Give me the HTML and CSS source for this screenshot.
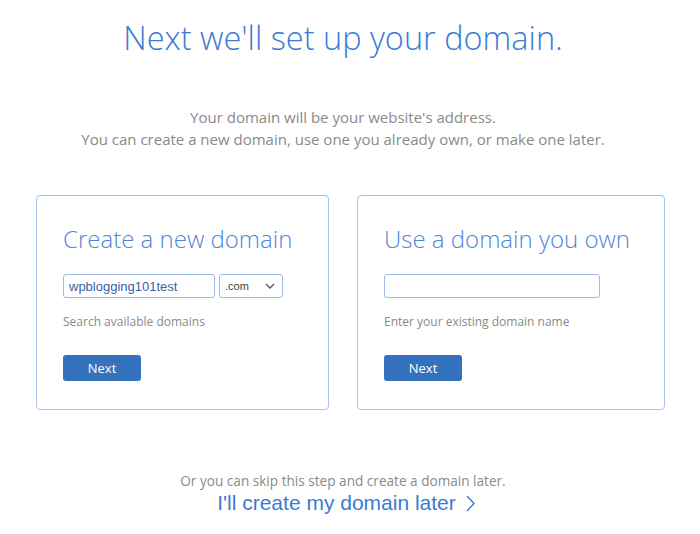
FILE: index.html
```html
<!DOCTYPE html>
<html>
<head>
    <title>Domain setup</title>
    <link rel="stylesheet" href="styles.css">
</head>
<body>
    <h1 class="title">Next we'll set up your domain.</h1>

    <p class="intro">
        Your domain will be your website's address.<br>
        You can create a new domain, use one you already own, or make one later.
    </p>

    <div class="cards">
        <div class="card card-new">
            <h2>Create a new domain</h2>
            <div class="field-row">
                <input type="text" class="domain-input" value="wpblogging101test">
                <div class="tld-select">
                    <span>.com</span>
                    <svg width="10" height="6" viewBox="0 0 10 6"><path d="M1 1l4 4 4-4" fill="none" stroke="#555" stroke-width="1.3"/></svg>
                </div>
            </div>
            <p class="hint">Search available domains</p>
            <button class="next-btn">Next</button>
        </div>

        <div class="card card-own">
            <h2>Use a domain you own</h2>
            <div class="field-row">
                <input type="text" class="own-input">
            </div>
            <p class="hint">Enter your existing domain name</p>
            <button class="next-btn">Next</button>
        </div>
    </div>

    <p class="skip">Or you can skip this step and create a domain later.</p>
    <a class="later-link" href="#">I'll create my domain later
        <svg class="chev" width="9" height="17" viewBox="0 0 9 17"><path d="M1 1l7 7.5-7 7.5" fill="none" stroke="#3a7bd5" stroke-width="1.4"/></svg>
    </a>
</body>
</html>
```

FILE: styles.css
```css
body { margin: 0; padding-right: 14px; font-family: "Open Sans", sans-serif; background: #fff; text-align: center; }
.title { margin: 0; padding-top: 17px; font-size: 32.5px; font-weight: 300; color: #3a7bd5; line-height: 42px; }
.intro { margin: 47px 0 0; font-size: 15px; color: #8a8a8a; line-height: 22px; }
.cards { display: flex; gap: 28px; margin: 45px 0 0 36px; text-align: left; }
.card { border: 1px solid #a7c2ec; border-radius: 4px; padding: 26px; height: 161px; }
.card-new { width: 239px; }
.card-own { width: 254px; }
.card h2 { margin: -1px 0 0; font-size: 24px; font-weight: 300; color: #4f86d9; line-height: 36px; }
.field-row { display: flex; gap: 4px; margin-top: 17px; }
.domain-input, .own-input, .tld-select {
    height: 24px; box-sizing: border-box; border: 1px solid #9dbbe8; border-radius: 3px;
}
.domain-input { width: 152px; padding: 0 5px; font-family: "Liberation Sans", Arial, sans-serif; font-size: 13px; color: #3a5fa8; }
.own-input { width: 216px; }
.tld-select { width: 64px; display: flex; align-items: center; justify-content: space-between; padding: 0 7px 0 5px; font-family: "Liberation Sans", Arial, sans-serif; font-size: 11px; color: #444; }
.hint { margin: 16px 0 0; font-size: 12px; color: #8a8a8a; line-height: 16px; }
.next-btn { margin-top: 25px; width: 78px; height: 26px; border: none; border-radius: 3px; background: #3572bd; color: #fff; font-family: "Open Sans", sans-serif; font-size: 13px; }
.skip { margin: 61px 0 0; font-size: 13.6px; color: #8a8a8a; line-height: 20px; }
.later-link { display: inline-flex; align-items: center; gap: 10px; font-family: "Liberation Sans", Arial, sans-serif; font-size: 21px; color: #3a7bd5; text-decoration: none; line-height: 25px; margin: -1px 0 0 6px; }
.chev { margin-top: 1px; }
```
